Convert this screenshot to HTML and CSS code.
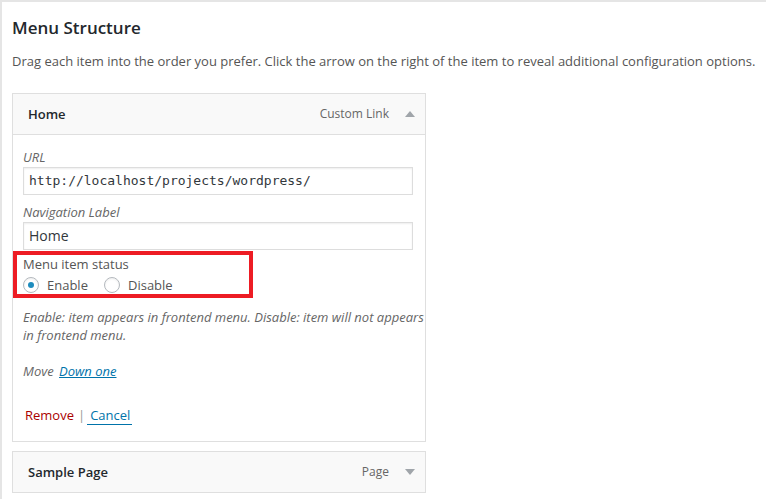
FILE: index.html
```html
<!DOCTYPE html>
<html lang="en">
<head>
<meta charset="utf-8">
<title>Menu Structure</title>
<link rel="stylesheet" href="styles.css">
</head>
<body>
<div class="panel">
  <h3 class="title">Menu Structure</h3>
  <p class="intro">Drag each item into the order you prefer. Click the arrow on the right of the item to reveal additional configuration options.</p>

  <div class="card">
    <div class="card-head">
      <span class="item-title">Home</span>
      <span class="item-controls">
        <span class="item-type">Custom Link</span>
        <svg class="arrow" width="10" height="6" viewBox="0 0 10 6"><polygon points="5,0 10,6 0,6" fill="#a0a5aa"/></svg>
      </span>
    </div>
    <div class="card-body">
      <label class="field-label">URL</label>
      <div class="input mono">http://localhost/projects/wordpress/</div>
      <label class="field-label gap">Navigation Label</label>
      <div class="input">Home</div>

      <div class="status-box">
        <div class="status-title">Menu item status</div>
        <div class="radio-row">
          <span class="radio checked"></span><span class="radio-label">Enable</span>
          <span class="radio"></span><span class="radio-label">Disable</span>
        </div>
      </div>

      <p class="help">Enable: item appears in frontend menu. Disable: item will not appears in frontend menu.</p>

      <p class="move">Move <a class="move-link">Down one</a></p>

      <div class="actions">
        <a class="remove">Remove</a><span class="sep">|</span><a class="cancel">Cancel</a>
      </div>
    </div>
  </div>

  <div class="card">
    <div class="card-head">
      <span class="item-title">Sample Page</span>
      <span class="item-controls">
        <span class="item-type">Page</span>
        <svg class="arrow" width="10" height="6" viewBox="0 0 10 6"><polygon points="0,0 10,0 5,6" fill="#a0a5aa"/></svg>
      </span>
    </div>
  </div>
</div>
</body>
</html>
```

FILE: styles.css
```css
html, body {
  margin: 0;
  padding: 0;
  background: #fff;
}

body {
  font-family: "Open Sans", "Liberation Sans", sans-serif;
  font-size: 13px;
  color: #555;
}

.panel {
  border-left: 2px solid #e5e5e5;
  border-top: 2px solid #e5e5e5;
  min-height: 499px;
  padding: 0 10px;
  box-sizing: border-box;
}

.title {
  margin: 14px 0 0;
  font-size: 17px;
  line-height: 24px;
  font-weight: 600;
  color: #23282d;
}

.intro {
  margin: 12px 0 0;
  line-height: 19px;
  white-space: nowrap;
}

.card {
  width: 414px;
  box-sizing: border-box;
  border: 1px solid #dfdfdf;
  margin-top: 22px;
  background: #fff;
}

.card + .card {
  margin-top: 9px;
}

.card-head {
  height: 40px;
  display: flex;
  align-items: center;
  justify-content: space-between;
  padding: 0 10px 0 15px;
  background: #f9f9f9;
}

.card-body {
  border-top: 1px solid #dfdfdf;
  padding: 13px 1px 17px 10px;
}

.item-title {
  font-weight: 600;
  color: #23282d;
  line-height: 20px;
}

.item-controls {
  display: flex;
  align-items: center;
  gap: 16px;
}

.item-type {
  color: #666;
  font-size: 12px;
  line-height: 20px;
}

.arrow {
  display: block;
}

.field-label {
  display: block;
  font-style: italic;
  color: #666;
  line-height: 19px;
}

.field-label.gap {
  margin-top: 8px;
}

.input {
  width: 390px;
  height: 28px;
  box-sizing: border-box;
  border: 1px solid #ddd;
  box-shadow: inset 0 1px 2px rgba(0, 0, 0, 0.07);
  padding: 0 5px;
  font-size: 14px;
  line-height: 26px;
  color: #32373c;
}

.input.mono {
  font-family: "DejaVu Sans Mono", "Liberation Mono", monospace;
  font-size: 13px;
}

.status-box {
  width: 240px;
  box-sizing: border-box;
  margin: 1px 0 0 -10px;
  border: 4px solid #ed1c24;
  padding: 0 6px;
}

.status-title {
  line-height: 18px;
  color: #555;
}

.radio-row {
  display: flex;
  align-items: center;
  height: 21px;
  padding-top: 3px;
  box-sizing: border-box;
  line-height: 18px;
}

.radio {
  width: 16px;
  height: 16px;
  box-sizing: border-box;
  border: 1px solid #b4b9be;
  border-radius: 50%;
  background: #fff;
  box-shadow: inset 0 1px 2px rgba(0, 0, 0, 0.07);
  display: flex;
  align-items: center;
  justify-content: center;
  flex: none;
}

.radio.checked::before {
  content: "";
  width: 6px;
  height: 6px;
  border-radius: 50%;
  background: #1e8cbe;
}

.radio-label {
  margin: 0 16px 0 8px;
  color: #555;
}

.help {
  margin: 10px 0 0;
  font-style: italic;
  color: #666;
  line-height: 18px;
}

.move {
  margin: 18px 0 0;
  font-style: italic;
  color: #666;
  line-height: 18px;
}

.move-link {
  color: #0073aa;
  text-decoration: underline;
  margin-left: 2px;
}

.actions {
  margin-top: 26px;
  line-height: 18px;
  padding-left: 2px;
}

.remove {
  color: #a00;
}

.sep {
  color: #999;
  margin: 0 2px 0 4px;
}

.cancel {
  color: #0073aa;
  border-bottom: 1px solid #0073aa;
  padding: 0 2px 0 3px;
}
```
